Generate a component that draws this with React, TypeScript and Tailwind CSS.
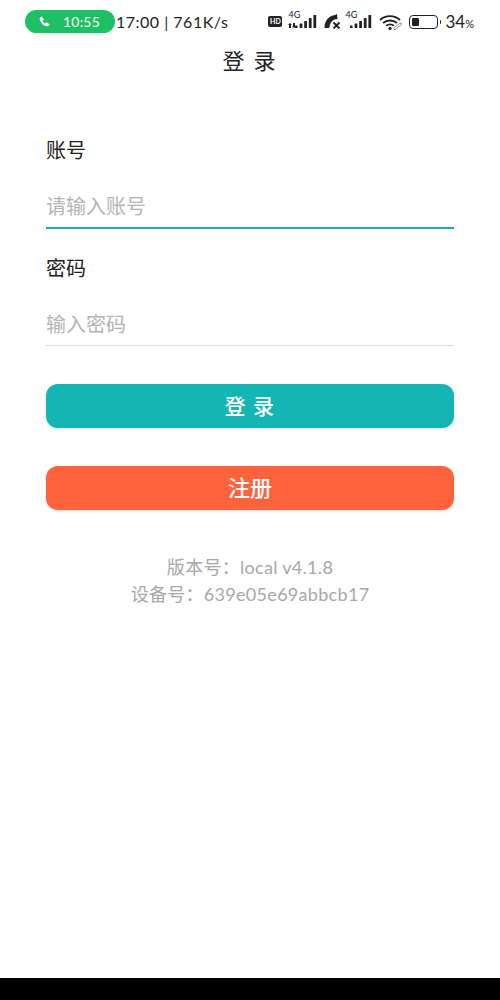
const FONT = "font-['Noto_Sans_CJK_SC','Noto_Sans',sans-serif]";
const LATIN = "font-['Lato','Noto_Sans_CJK_SC',sans-serif]";

function Bars() {
  return (
    <svg width="22" height="13" viewBox="0 0 22 13" fill="#222">
      <rect x="0" y="10.5" width="2.6" height="2.5" rx="0.6" />
      <rect x="4.6" y="8.5" width="2.8" height="4.5" rx="0.6" />
      <rect x="9.2" y="6" width="2.8" height="7" rx="0.6" />
      <rect x="13.8" y="3" width="2.8" height="10" rx="0.6" />
      <rect x="18.4" y="0" width="2.8" height="13" rx="0.6" />
    </svg>
  );
}

function Signal({ arrows }: { arrows?: boolean }) {
  return (
    <div className={`relative h-[17px] ${arrows ? "w-[32px]" : "w-[30px]"}`}>
      <span className={`absolute left-[3px] top-[-3px] text-[9px] leading-[10px] text-[#222] ${LATIN}`}>4G</span>
      {arrows && (
        <svg className="absolute left-[3px] bottom-[2px]" width="8" height="5" viewBox="0 0 8 5" fill="#222">
          <path d="M2 0 L4 2 H3 V5 H1 V2 H0 Z" />
          <path d="M6 5 L4 3 H5 V0 H7 V3 H8 Z" />
        </svg>
      )}
      <div className="absolute right-0 bottom-[2px] leading-none">
        <Bars />
      </div>
    </div>
  );
}

function StatusBar() {
  return (
    <div className="h-[44px] pt-[10px] pl-[25px] pr-[26px] flex items-start">
      <div className="w-[90px] h-[23px] rounded-full bg-[#1fbf66] flex items-center pl-[14px] gap-[13px] text-white">
        <svg width="11" height="11" viewBox="0 0 24 24" fill="white">
          <path d="M6.6 1.8 L10 7.2 C10.4 7.9 10.2 8.6 9.7 9.1 L7.9 10.7 C8.9 13 11 15.1 13.3 16.1 L14.9 14.3 C15.4 13.8 16.1 13.6 16.8 14 L22.2 17.4 C22.9 17.9 23 18.8 22.5 19.5 C21 21.6 19 23 16.6 22.4 C9.8 20.7 3.3 14.2 1.6 7.4 C1 5 2.4 3 4.5 1.5 C5.2 1 6.1 1.1 6.6 1.8 Z" />
        </svg>
        <span className={`text-[14px] tracking-[0.2px] ${LATIN}`}>10:55</span>
      </div>
      <span className={`ml-[1px] text-[16px] leading-[23px] tracking-[0.5px] text-[#222] ${LATIN}`}>17:00 | 761K/s</span>
      <div className="ml-auto h-[23px] flex items-center">
        <div className="w-[14px] h-[11px] rounded-[2px] bg-[#222] flex items-center justify-center">
          <span className={`text-[7px] leading-none font-bold text-white ${LATIN}`}>HD</span>
        </div>
        <div className="ml-[3px]">
          <Signal arrows />
        </div>
        <svg className="ml-[7px]" width="18" height="15" viewBox="0 0 18 15" fill="#222">
          <path d="M0.5 13.5 C0.5 7 5 1.5 11 1 L13 0 L13.5 5 C9 5 6 8 5.5 13 C5.5 13.8 5 14 4.4 14 L1.6 14 C0.9 14 0.5 14 0.5 13.5 Z" />
          <path d="M9.5 8.5 L15.5 14.5 M15.5 8.5 L9.5 14.5" stroke="#222" strokeWidth="1.8" fill="none" />
        </svg>
        <div className="ml-[0px]">
          <Signal />
        </div>
        <svg className="ml-[7px]" width="23" height="16" viewBox="0 0 23 16" fill="none">
          <path d="M1 6 C6.5 0.8 15.5 0.8 21 6" stroke="#222" strokeWidth="1.9" />
          <path d="M4 9 C8 5.6 14 5.6 18 9" stroke="#222" strokeWidth="1.9" />
          <path d="M7.2 11.8 C9.6 10 12.4 10 14.8 11.8" stroke="#222" strokeWidth="1.9" />
          <circle cx="11" cy="14.4" r="1.6" fill="#222" />
          <path d="M16 14.5 L21.5 10" stroke="#888" strokeWidth="2.8" strokeLinecap="round" />
          <path d="M16 14.5 L21.5 10" stroke="#fff" strokeWidth="1.1" strokeLinecap="round" />
        </svg>
        <div className="ml-[7px] w-[29px] h-[14px] rounded-[4px] border-[1.5px] border-[#222] p-[2px]">
          <div className="w-[7px] h-full rounded-[1px] bg-[#222]" />
        </div>
        <div className="ml-[1.5px] w-[1.5px] h-[4px] bg-[#222] rounded-r-sm" />
        <span className={`ml-[4px] pt-[2px] text-[17px] leading-[23px] text-[#222] ${LATIN}`}>
          34<span className="text-[11px]">%</span>
        </span>
      </div>
    </div>
  );
}

export default function App() {
  return (
    <div className={`h-[1000px] w-[500px] bg-white flex flex-col overflow-hidden ${FONT}`}>
      <StatusBar />
      <h1 className="h-[34px] text-center text-[22px] leading-[30px] font-normal text-[#222] tracking-[2px]">登 录</h1>

      <div className="px-[46px] pt-[59px] flex-1">
        <label className="block text-[20px] leading-[26px] text-[#222]">账号</label>
        <div className="mt-[16px] h-[50px] border-b-2 border-[#14b0ac] pt-[14px]">
          <input
            placeholder="请输入账号"
            className="w-full h-[26px] block bg-transparent text-[20px] leading-[26px] outline-none placeholder:text-[#b4b4b4]"
          />
        </div>
        <label className="block mt-[26px] text-[20px] leading-[26px] text-[#222]">密码</label>
        <div className="mt-[16px] h-[49px] border-b-[1.5px] border-[#dddddd] pt-[14px]">
          <input
            placeholder="输入密码"
            className="w-full h-[26px] block bg-transparent text-[20px] leading-[26px] outline-none placeholder:text-[#b4b4b4]"
          />
        </div>

        <button className="block mt-[38px] w-full h-[44px] rounded-[12px] bg-[#13b6b4] shadow-[0_1px_3px_rgba(0,0,0,0.15)] text-white text-[21px] font-medium tracking-[1.5px]">
          登 录
        </button>
        <button className="block mt-[38px] w-full h-[44px] pb-[4px] rounded-[12px] bg-[#ff633b] shadow-[0_1px_3px_rgba(0,0,0,0.15)] text-white text-[22px] font-medium">
          注册
        </button>

        <div className={`mt-[44px] text-center text-[18px] leading-[27px] text-[#a8a8a8] tracking-[0.3px] ${LATIN}`}>
          <p>版本号：local v4.1.8</p>
          <p>设备号：639e05e69abbcb17</p>
        </div>
      </div>

      <div className="h-[22px] bg-black" />
    </div>
  );
}
